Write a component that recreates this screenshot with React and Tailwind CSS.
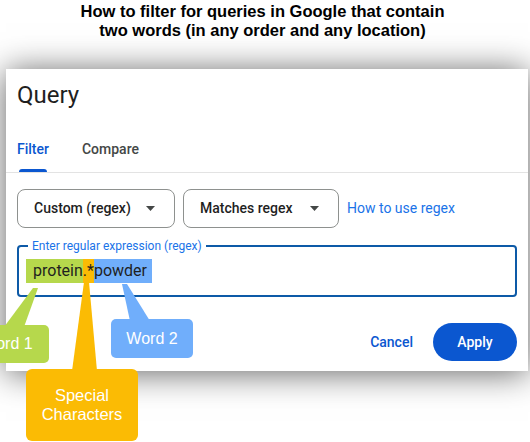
// Regex filter explainer: Search Console "Query" dialog with callouts
const roboto = { fontFamily: "Roboto, 'Noto Sans', sans-serif" };

function Caret() {
  return (
    <svg width="9" height="5" viewBox="0 0 9 5" className="shrink-0">
      <polygon points="0,0 9,0 4.5,5" fill="#444746" />
    </svg>
  );
}

function Dropdown({ label, width }) {
  return (
    <div
      className={`${width} h-[39px] flex items-center justify-between pl-[16px] pr-[19px] border border-[#8e918f] rounded-[8px] text-[14px] font-medium text-[#1f1f1f]`}
    >
      <span>{label}</span>
      <Caret />
    </div>
  );
}

export default function App() {
  return (
    <div className="relative w-[530px] h-[442px] overflow-hidden bg-white">
      <div className="pt-[2px] pr-[5px] text-center font-bold text-[16.5px] leading-[19px] text-black font-['Liberation_Sans',Arial,sans-serif]">
        How to filter for queries in Google that contain
        <br />
        two words (in any order and any location)
      </div>

      <div
        className="mt-[29px] ml-[6px] w-[522px] bg-white shadow-[0_2px_32px_rgba(0,0,0,0.62)]"
        style={roboto}
      >
        <div className="px-[11px] pt-[10px] text-[24px] leading-[32px] text-[#1f1f1f]">Query</div>

        <div className="mt-[28px] border-b border-[#e3e3e3] px-[11px] flex gap-[33px] text-[14px] leading-[20px] font-medium">
          <div className="flex flex-col">
            <span className="text-[#0b57d0]">Filter</span>
            <div className="mt-[10px] mx-[2px] h-[3px] rounded-t-[3px] bg-[#0b57d0]" />
          </div>
          <span className="text-[#444746]">Compare</span>
        </div>

        <div className="px-[11px] pt-[16px] pb-[10px]">
          <div className="flex items-center gap-2">
            <Dropdown label="Custom (regex)" width="w-[158px]" />
            <Dropdown label="Matches regex" width="w-[156px]" />
            <span className="text-[14px] text-[#1a73e8]">How to use regex</span>
          </div>

          <div className="relative mt-[17px] h-[52px] border-2 border-[#0d5aa7] rounded-[4px] flex items-center pl-[7px]">
            <span className="absolute left-[9px] top-[-9px] px-[4px] bg-white text-[12px] leading-[16px] text-[#1a73e8]">
              Enter regular expression (regex)
            </span>
            <div className="flex h-[24px] text-[16px] leading-[24px] text-[#1f1f1f]">
              <span className="bg-[#b6d84c] pl-[7px]">protein</span>
              <span className="bg-[#fbbb04]">.*</span>
              <span className="bg-[#70aefb] pr-[5px]">powder</span>
            </div>
          </div>

          <div className="mt-[26px] flex items-center justify-end gap-2 text-[14px] font-medium">
            <span className="px-3 text-[#0b57d0]">Cancel</span>
            <span className="h-[38px] w-[84px] flex items-center justify-center rounded-full bg-[#0b57d0] text-white">
              Apply
            </span>
          </div>
        </div>
      </div>

      {/* callout pointers */}
      <svg className="absolute left-0 top-0 pointer-events-none" width="530" height="442">
        <polygon points="33,288 38,288 24,327 4,327" fill="#b6d84c" />
        <polygon points="84,282 89,282 97,371 72,371" fill="#fbbb04" />
        <polygon points="122,284 127,284 150,321 130,321" fill="#70aefb" />
      </svg>

      <div className="absolute left-[-35px] top-[325px] w-[84px] h-[38px] rounded-[5px] bg-[#b6d84c] flex items-center justify-center text-white text-[16px] font-['Liberation_Sans',Arial,sans-serif]">
        Word 1
      </div>
      <div className="absolute left-[111px] top-[319px] w-[82px] h-[39px] rounded-[5px] bg-[#70aefb] flex items-center justify-center text-white text-[16px] font-['Liberation_Sans',Arial,sans-serif]">
        Word 2
      </div>
      <div className="absolute left-[26px] top-[369px] w-[112px] h-[72px] rounded-[6px] bg-[#fbbb04] flex items-center justify-center text-center text-white text-[16.5px] leading-[19px] font-['Liberation_Sans',Arial,sans-serif]">
        Special
        <br />
        Characters
      </div>
    </div>
  );
}
